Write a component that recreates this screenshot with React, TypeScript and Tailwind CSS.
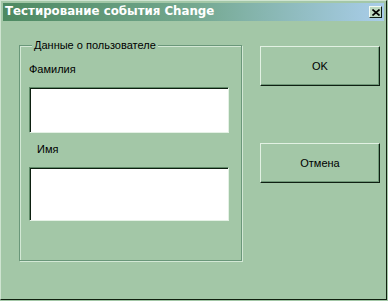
import React from 'react';

const face = 'bg-[#a3c7a7]';

const TextBox: React.FC<{ className?: string }> = ({ className }) => (
  <div
    className={`w-[200px] bg-white border border-t-[#5f8a68] border-l-[#5f8a68] border-b-[#e4f1e5] border-r-[#e4f1e5] shadow-[inset_1px_1px_0_#0d1f10] ${className ?? ''}`}
  />
);

const Btn: React.FC<{ label: string; className?: string }> = ({ label, className }) => (
  <button
    className={`w-[120px] h-[40px] ${face} text-[11px] text-black border border-t-[#e2f1e3] border-l-[#e2f1e3] border-b-[#0f1f12] border-r-[#0f1f12] shadow-[inset_-1px_-1px_0_#6f9878] flex items-center justify-center ${className ?? ''}`}
  >
    {label}
  </button>
);

const App: React.FC = () => {
  return (
    <div
      className={`w-[388px] h-[301px] ${face} overflow-hidden`}
      style={{ fontFamily: '"Liberation Sans", Arial, sans-serif' }}
    >
      {/* window frame */}
      <div className="w-[387px] h-[300px] border border-t-[#cfe4d1] border-l-[#cfe4d1] border-b-[#10200f] border-r-[#10200f] p-[2px] flex flex-col">
        {/* title bar */}
        <div className="h-[18px] flex items-center justify-between bg-gradient-to-r from-[#4d8961] via-[#74a88f] to-[#a9cdea] pl-[2px] pr-[2px]">
          <span
            className="text-white font-bold text-[11.8px] leading-none"
            style={{ fontFamily: '"DejaVu Sans", Verdana, sans-serif' }}
          >
            Тестирование события Change
          </span>
          <div className="w-[13px] h-[12px] bg-[#bcd9c0] border border-t-[#f2faf2] border-l-[#f2faf2] border-b-[#0f1f12] border-r-[#0f1f12] flex items-center justify-center">
            <svg width="8" height="7" viewBox="0 0 8 7">
              <path d="M0.5 0.5 L7.5 6.5 M7.5 0.5 L0.5 6.5" stroke="#000" strokeWidth="1.6" />
            </svg>
          </div>
        </div>

        {/* body */}
        <div className="flex pl-[16px] pt-[24px]">
          {/* group box */}
          <div className="relative w-[223px] h-[216px] border border-[#6a977a] shadow-[inset_1px_1px_0_#d3e8d5,1px_1px_0_#d3e8d5] pl-[9px] pt-[16px]">
            <span className={`absolute left-[12px] -top-[8px] px-[2px] ${face} text-[11px] leading-[14px] text-black`}>
              Данные о пользователе
            </span>
            <div className="text-[11px] leading-[14px] text-black">Фамилия</div>
            <TextBox className="mt-[11px] h-[46px]" />
            <div className="text-[11px] leading-[14px] text-black mt-[9px] pl-[8px]">Имя</div>
            <TextBox className="mt-[11px] h-[54px]" />
          </div>

          {/* buttons */}
          <div className="ml-[18px] mt-[1px] flex flex-col">
            <Btn label="OK" className="h-[39px]" />
            <Btn label="Отмена" className="mt-[57px]" />
          </div>
        </div>
      </div>
    </div>
  );
};

export default App;
